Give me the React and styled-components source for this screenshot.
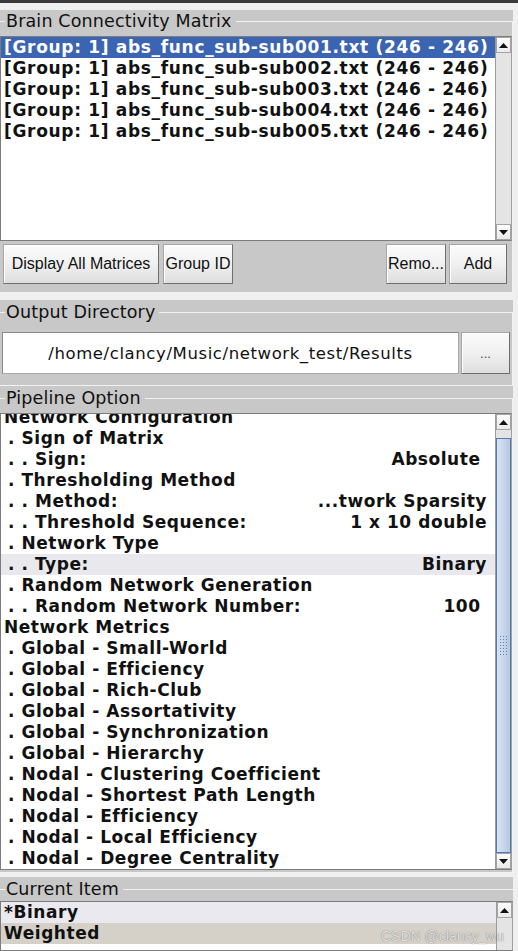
import React from 'react';
import styled, { createGlobalStyle } from 'styled-components';

const Global = createGlobalStyle`
  html, body { margin: 0; padding: 0; background: #efefef; }
  body { font-family: "DejaVu Sans", "Noto Sans", sans-serif; color: #111; }
  * { box-sizing: border-box; }
`;

const Window = styled.div`
  position: relative;
  width: 518px;
  height: 951px;
  overflow: hidden;
  background: #efefef;
  border-top: 3px solid #3b3b3b;
  padding-top: 7px;
  display: flex;
  flex-direction: column;
`;

const Section = styled.div`
  width: 513px;
  background: #c8c8c8;
  margin-top: ${p => p.$gap || 0}px;
  padding-top: ${p => p.$pt || 0}px;
  flex: ${p => (p.$grow ? 1 : 'none')};
  display: flex;
  flex-direction: column;
`;

const Frame = styled.fieldset`
  margin: 0;
  min-width: 0;
  border: 1px solid #f2f2f2;
  border-left: none;
  ${p => (p.$open ? 'border-bottom: none; border-right: none;' : '')}
  padding: 0 0 ${p => p.$pb || 0}px 0;
  flex: ${p => (p.$grow ? 1 : 'none')};
  display: flex;
  flex-direction: column;
`;

const Legend = styled.legend`
  margin-left: 5px;
  padding: 0 4px 0 1px;
  font-size: 17.5px;
  line-height: 20px;
  letter-spacing: 0.15px;
  color: #111;
`;

const ListBox = styled.div`
  margin-top: ${p => p.$mt || 0}px;
  height: ${p => (p.$h ? `${p.$h}px` : 'auto')};
  flex: ${p => (p.$grow ? 1 : 'none')};
  border: 1px solid #7c7c7c;
  border-right-color: #a0a0a0;
  background: #fff;
  display: flex;
  overflow: hidden;
`;

const Rows = styled.div`
  flex: 1;
  min-width: 0;
  overflow: hidden;
  display: flex;
  flex-direction: column;
  margin-top: ${p => p.$offset || 0}px;
`;

const Row = styled.div`
  flex: none;
  height: 21px;
  line-height: 21px;
  padding: 0 8px 0 ${p => (p.$indent ? 7 : 3)}px;
  font-weight: bold;
  font-size: 17px;
  letter-spacing: ${p => p.$ls || 0.55}px;
  white-space: pre;
  display: flex;
  justify-content: space-between;
  color: ${p => (p.$selected ? '#fff' : '#111')};
  background: ${p => p.$bg || 'transparent'};
`;

const ScrollBar = styled.div`
  flex: none;
  width: 16px;
  background: #e4e4e4;
  border-left: 1px solid #9c9c9c;
  display: flex;
  flex-direction: column;
`;

const ArrowBtn = styled.div`
  flex: none;
  height: 16px;
  border: 1px solid #a4a4a4;
  background: linear-gradient(#fdfdfd, #e9e9e9);
  display: flex;
  align-items: center;
  justify-content: center;
`;

const Track = styled.div`
  flex: ${p => (p.$grow ? 1 : 'none')};
  height: ${p => (p.$h ? `${p.$h}px` : 'auto')};
`;

const Thumb = styled.div`
  flex: 1;
  border: 1px solid #5878b4;
  background: linear-gradient(90deg, #d9e4f3, #c3d3ea 60%, #b4c8e3);
  display: flex;
  align-items: center;
  justify-content: center;
`;

const Grip = styled.div`
  width: 9px;
  height: 22px;
  background-image: radial-gradient(circle, #5f7fbd 0.7px, transparent 1px);
  background-size: 3px 3px;
`;

const ButtonRow = styled.div`
  margin-top: 3px;
  height: 40px;
  padding: 0 5px 0 3px;
  display: flex;
  gap: 4px;
`;

const Spacer = styled.div`
  flex: 1;
`;

const Button = styled.div`
  flex: none;
  width: ${p => p.$w}px;
  height: ${p => p.$h || 40}px;
  margin-left: ${p => p.$ml || 0}px;
  border: 1px solid #a6a6a6;
  border-right-color: #6e6e6e;
  border-bottom-color: #6e6e6e;
  background: linear-gradient(#fbfbfb, #f0f0f0 50%, #dedede);
  box-shadow: inset 1px 1px 0 #ffffff;
  display: flex;
  align-items: center;
  justify-content: center;
  font-family: "Liberation Sans", Arial, sans-serif;
  font-size: ${p => p.$fs || 16}px;
  color: ${p => p.$color || '#111'};
  white-space: nowrap;
`;

const DirRow = styled.div`
  margin-top: 10px;
  height: 42px;
  padding-left: 2px;
  display: flex;
  gap: 2px;
`;

const PathField = styled.div`
  width: 457px;
  height: 42px;
  background: #fff;
  border: 1px solid #a8a8a8;
  border-top-color: #8a8a8a;
  border-left-color: #8a8a8a;
  display: flex;
  align-items: center;
  justify-content: center;
  font-family: "DejaVu Sans", sans-serif;
  font-size: 16.5px;
  letter-spacing: 0.6px;
  color: #111;
`;

const Watermark = styled.div`
  position: absolute;
  left: 381px;
  top: 925px;
  font-family: "Liberation Sans", Arial, sans-serif;
  font-size: 14px;
  color: rgba(242, 242, 242, 0.9);
  text-shadow: 0 0 1px rgba(70, 70, 70, 0.9);
  white-space: nowrap;
`;

const Up = () => (
  <svg width="9" height="5" viewBox="0 0 9 5"><polygon points="0,5 9,5 4.5,0" fill="#111" /></svg>
);
const Down = () => (
  <svg width="9" height="5" viewBox="0 0 9 5"><polygon points="0,0 9,0 4.5,5" fill="#111" /></svg>
);

const matrices = [1, 2, 3, 4, 5].map(n => `[Group: 1] abs_func_sub-sub00${n}.txt (246 - 246)`);

const tree = [
  ['Network Configuration'],
  ['. Sign of Matrix'],
  ['. . Sign:', 'Absolute '],
  ['. Thresholding Method'],
  ['. . Method:', '...twork Sparsity'],
  ['. . Threshold Sequence:', '1 x 10 double'],
  ['. Network Type'],
  ['. . Type:', 'Binary', true],
  ['. Random Network Generation'],
  ['. . Random Network Number:', '100 '],
  ['Network Metrics'],
  ['. Global - Small-World'],
  ['. Global - Efficiency'],
  ['. Global - Rich-Club'],
  ['. Global - Assortativity'],
  ['. Global - Synchronization'],
  ['. Global - Hierarchy'],
  ['. Nodal - Clustering Coefficient'],
  ['. Nodal - Shortest Path Length'],
  ['. Nodal - Efficiency'],
  ['. Nodal - Local Efficiency'],
  ['. Nodal - Degree Centrality'],
];

export default function App() {
  return (
    <>
      <Global />
      <Window>
        <Section $pt={1}>
          <Frame $pb={8}>
            <Legend>Brain Connectivity Matrix</Legend>
            <ListBox $mt={5} $h={205}>
              <Rows>
                {matrices.map((m, i) => (
                  <Row key={m} $ls={0.68} $selected={i === 0} $bg={i === 0 ? '#3b64b2' : undefined}>
                    {m}
                  </Row>
                ))}
              </Rows>
              <ScrollBar>
                <ArrowBtn><Up /></ArrowBtn>
                <Track $grow />
                <ArrowBtn><Down /></ArrowBtn>
              </ScrollBar>
            </ListBox>
            <ButtonRow>
              <Button $w={156}>Display All Matrices</Button>
              <Button $w={70}>Group ID</Button>
              <Spacer />
              <Button $w={60}>Remo...</Button>
              <Button $w={58} $ml={-1}>Add</Button>
            </ButtonRow>
          </Frame>
        </Section>

        <Section $gap={7} $pt={2}>
          <Frame $pb={11}>
            <Legend>Output Directory</Legend>
            <DirRow>
              <PathField>/home/clancy/Music/network_test/Results</PathField>
              <Button $w={49} $h={42} $fs={13} $color="#444">...</Button>
            </DirRow>
          </Frame>
        </Section>

        <Section $pt={2}>
          <Frame $pb={2}>
            <Legend>Pipeline Option</Legend>
            <ListBox $mt={5} $h={457}>
              <Rows $offset={-7}>
                {tree.map(([label, value, hl]) => (
                  <Row key={label} $indent={label.startsWith('.')} $bg={hl ? '#e8e8ed' : undefined}>
                    <span>{label}</span>
                    {value && <span>{value}</span>}
                  </Row>
                ))}
              </Rows>
              <ScrollBar>
                <ArrowBtn><Up /></ArrowBtn>
                <Track $h={8} />
                <Thumb><Grip /></Thumb>
                <ArrowBtn><Down /></ArrowBtn>
              </ScrollBar>
            </ListBox>
          </Frame>
        </Section>

        <Section $gap={4} $pt={2} $grow>
          <Frame $open $grow>
            <Legend>Current Item</Legend>
            <ListBox $mt={2} $grow>
              <Rows>
                <Row $bg="#eae9ef">*Binary</Row>
                <Row $bg="#d5d1c9">Weighted</Row>
              </Rows>
              <ScrollBar>
                <ArrowBtn><Up /></ArrowBtn>
                <Track $grow />
              </ScrollBar>
            </ListBox>
          </Frame>
        </Section>

        <Watermark>CSDN @clancy_wu</Watermark>
      </Window>
    </>
  );
}
